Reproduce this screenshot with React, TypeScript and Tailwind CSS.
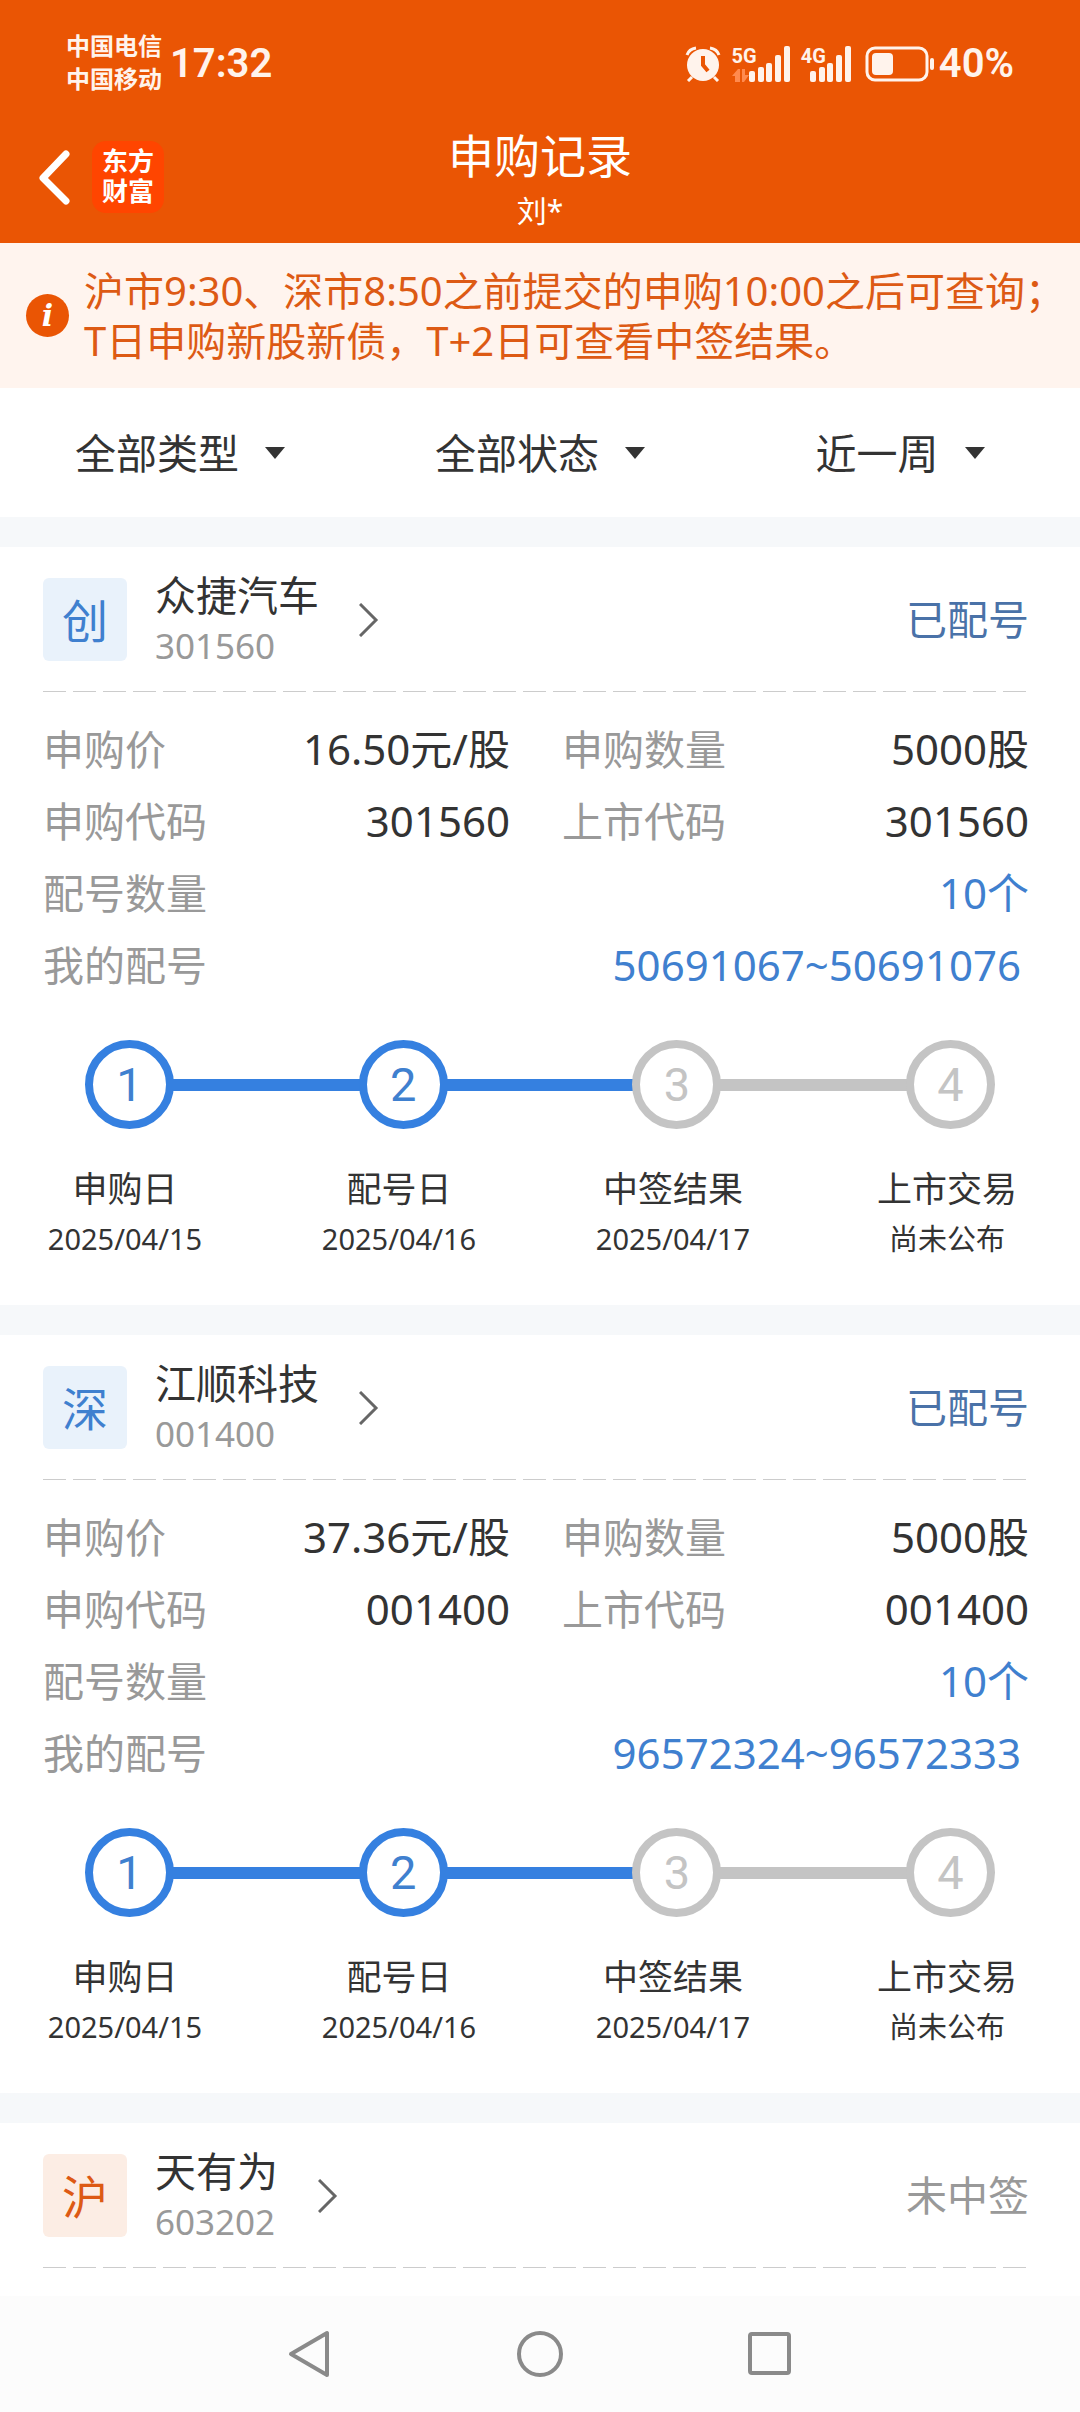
import React, { useState } from 'react';

type Step = { label: string; date: string; done: boolean };

type Subscription = {
    market: string;
    tone: 'blue' | 'orange';
    name: string;
    code: string;
    status: string;
    detail?: {
        price: string;
        amount: string;
        applyCode: string;
        listCode: string;
        allotCount: string;
        allotRange: string;
        steps: Step[];
    };
};

const STEPS: Step[] = [
    { label: '申购日', date: '2025/04/15', done: true },
    { label: '配号日', date: '2025/04/16', done: true },
    { label: '中签结果', date: '2025/04/17', done: false },
    { label: '上市交易', date: '尚未公布', done: false },
];

const RECORDS: Subscription[] = [
    {
        market: '创',
        tone: 'blue',
        name: '众捷汽车',
        code: '301560',
        status: '已配号',
        detail: {
            price: '16.50元/股',
            amount: '5000股',
            applyCode: '301560',
            listCode: '301560',
            allotCount: '10个',
            allotRange: '50691067~50691076',
            steps: STEPS,
        },
    },
    {
        market: '深',
        tone: 'blue',
        name: '江顺科技',
        code: '001400',
        status: '已配号',
        detail: {
            price: '37.36元/股',
            amount: '5000股',
            applyCode: '001400',
            listCode: '001400',
            allotCount: '10个',
            allotRange: '96572324~96572333',
            steps: STEPS,
        },
    },
    { market: '沪', tone: 'orange', name: '天有为', code: '603202', status: '未中签' },
];

const FILTERS = [
    { id: 'type', label: '类型', options: ['全部类型', '新股', '新债'] },
    { id: 'status', label: '状态', options: ['全部状态', '已配号', '已中签', '未中签'] },
    { id: 'range', label: '时间', options: ['近一周', '近一月', '近三月'] },
];

const Signal: React.FC<{ label: string; transfer?: boolean }> = ({ label, transfer }) => (
    <div className="flex items-end">
        <div className="flex h-9 flex-col justify-between">
            <span className="text-[20px] leading-5 font-bold">{label}</span>
            {transfer && (
                <svg width="17" height="13" viewBox="0 0 17 13" fill="#ff8a4e" aria-hidden="true">
                    <path d="M6 0h2v13H3V7H0zM10 0h3v6h4l-5 7h-2z" />
                </svg>
            )}
        </div>
        <svg className={transfer ? '-ml-2' : '-ml-4'} width="41" height="36" viewBox="0 0 41 36" fill="currentColor" aria-hidden="true">
            <rect x="0" y="25" width="6" height="11" rx="2" />
            <rect x="9" y="21" width="6" height="15" rx="2" />
            <rect x="17" y="17" width="6" height="19" rx="2" />
            <rect x="26" y="9" width="6" height="27" rx="2" />
            <rect x="35" y="0" width="6" height="36" rx="2" />
        </svg>
    </div>
);

const StatusBar: React.FC = () => (
    <div className="flex h-32 items-center justify-between px-[66px] font-['Roboto','Noto_Sans_CJK_SC',sans-serif] text-[#fff3ec]">
        <div className="flex items-center gap-2">
            <div className="text-[24px] leading-[33px] font-bold">
                <div>中国电信</div>
                <div>中国移动</div>
            </div>
            <span className="text-[40px] leading-[50px] font-semibold">17:32</span>
        </div>
        <div className="flex items-center gap-3.5">
            <div className="flex items-center gap-[11px]">
                <svg width="36" height="36" viewBox="0 0 36 36" aria-label="闹钟">
                    <circle cx="18" cy="19" r="16" fill="currentColor" />
                    <path d="M2 9Q4 3 11 2M34 9Q32 3 25 2M7 31l-4 4M29 31l4 4" fill="none" stroke="currentColor" strokeWidth="3" />
                    <path d="M18 10v9l5 6" fill="none" stroke="#ea5504" strokeWidth="4" />
                </svg>
                <Signal label="5G" transfer />
                <Signal label="4G" />
            </div>
            <div className="flex items-center gap-1">
                <svg width="70" height="36" viewBox="0 0 70 36" aria-label="电量">
                    <rect x="2" y="2" width="60" height="32" rx="8" fill="none" stroke="currentColor" strokeWidth="3" />
                    <rect x="7" y="7" width="21" height="22" rx="4" fill="currentColor" />
                    <rect x="65" y="12" width="4" height="12" rx="2" fill="currentColor" />
                </svg>
                <span className="text-[40px] leading-[50px] font-semibold">40%</span>
            </div>
        </div>
    </div>
);

const Header: React.FC = () => (
    <header className="bg-[#ea5504] text-white">
        <StatusBar />
        <div className="grid grid-cols-[1fr_auto_1fr] pb-[5px]">
            <div className="flex h-[98px] items-center gap-5 pl-9">
                <button type="button" aria-label="返回">
                    <svg width="36" height="56" viewBox="0 0 36 56" fill="none" stroke="currentColor" strokeWidth="7" strokeLinecap="round" strokeLinejoin="round">
                        <path d="M30 5L7 29l23 23" />
                    </svg>
                </button>
                <div className="flex size-[72px] flex-col items-center justify-center rounded-[14px] bg-[#ff4500] font-['Roboto','Noto_Sans_CJK_SC',sans-serif] text-[26px] leading-[30px] font-bold">
                    <span>东方</span>
                    <span>财富</span>
                </div>
            </div>
            <div className="text-center">
                <h1 className="text-[46px] leading-[55px]">申购记录</h1>
                <p className="text-[30px] leading-[55px]">刘*</p>
            </div>
        </div>
    </header>
);

const Notice: React.FC = () => (
    <div className="flex h-[145px] items-center gap-[15px] bg-[#fff4ee] pl-[26px] text-[#dd5a14]">
        <span className="flex size-[43px] shrink-0 items-center justify-center rounded-full bg-[#ea5504] font-['DejaVu_Serif',serif] text-[30px] leading-[43px] font-bold text-white italic">
            i
        </span>
        <p className="text-[40px] leading-[50px] whitespace-nowrap">
            沪市9:30、深市8:50之前提交的申购10:00之后可查询；
            <br />
            T日申购新股新债，T+2日可查看中签结果。
        </p>
    </div>
);

const Filters: React.FC = () => {
    const [values, setValues] = useState<Record<string, string>>({});

    return (
        <div className="grid h-[129px] grid-cols-3 bg-white">
            {FILTERS.map(filter => (
                <label key={filter.id} className="flex items-center justify-center gap-[26px]">
                    <select
                        aria-label={filter.label}
                        value={values[filter.id] ?? filter.options[0]}
                        onChange={e => setValues(prev => ({ ...prev, [filter.id]: e.target.value }))}
                        className="field-sizing-content appearance-none text-[41px] leading-[60px] text-[#333]"
                    >
                        {filter.options.map(option => (
                            <option key={option}>{option}</option>
                        ))}
                    </select>
                    <svg width="20" height="12" viewBox="0 0 20 12" fill="#333" aria-hidden="true">
                        <path d="M0 0h20L10 12z" />
                    </svg>
                </label>
            ))}
        </div>
    );
};

const Field: React.FC<{ label: string; value: string; wide?: boolean; highlight?: boolean; inset?: boolean }> = ({
    label,
    value,
    wide,
    highlight,
    inset,
}) => (
    <div className={`flex justify-between leading-[72px] ${wide ? 'col-span-2' : ''}`}>
        <dt className="text-[#999]">{label}</dt>
        <dd className={`text-[42px] ${highlight ? 'text-[#3f80cf]' : 'text-[#333]'} ${inset ? 'pr-2' : ''}`}>{value}</dd>
    </div>
);

const Progress: React.FC<{ steps: Step[] }> = ({ steps }) => (
    <div className="pt-[39px]">
        <div className="flex items-center px-[85px]">
            {steps.map((step, i) => (
                <React.Fragment key={step.label}>
                    {i > 0 && <div className={`-mx-px h-3 flex-1 ${steps[i - 1].done ? 'bg-[#3580e0]' : 'bg-[#c4c4c4]'}`} />}
                    <div
                        className={`flex size-[89px] items-center justify-center rounded-full border-8 font-['Roboto',sans-serif] text-[47px] leading-[60px] ${
                            step.done ? 'border-[#3580e0] text-[#3f80cf]' : 'border-[#c4c4c4] text-[#c4c4c4]'
                        }`}
                    >
                        {i + 1}
                    </div>
                </React.Fragment>
            ))}
        </div>
        <ol className="flex justify-between pt-[35px] pr-[45px] pb-[41px] pl-[37px] text-center text-[#333]">
            {steps.map(step => (
                <li key={step.label} className="w-44 leading-[50px]">
                    <div className="text-[35px]">{step.label}</div>
                    <div className="text-[29px]">{step.date}</div>
                </li>
            ))}
        </ol>
    </div>
);

const RecordCard: React.FC<{ record: Subscription }> = ({ record }) => {
    const { detail } = record;

    return (
        <section className="border-t-[30px] border-[#f6f8fa] bg-white text-[41px]">
            <div className="pt-[31px] pr-[51px] pl-[43px]">
                <div className="flex items-center justify-between">
                    <button type="button" className="flex items-center text-left">
                        <span
                            className={`flex h-[83px] w-[84px] items-center justify-center rounded-md text-[46px] leading-[60px] ${
                                record.tone === 'blue' ? 'bg-[#e9f2fb] text-[#3f80cf]' : 'bg-[#fcede4] text-[#dd5a14]'
                            }`}
                        >
                            {record.market}
                        </span>
                        <span className="flex h-[83px] flex-col justify-center pl-7">
                            <span className="leading-[52px] text-[#333]">{record.name}</span>
                            <span className="text-[35px] leading-[50px] text-[#999]">{record.code}</span>
                        </span>
                        <svg className="ml-10" width="20" height="34" viewBox="0 0 20 34" fill="none" stroke="#666" strokeWidth="3" aria-hidden="true">
                            <path d="M1 1l16 16L1 33" />
                        </svg>
                    </button>
                    <span className={detail ? 'text-[#4a72a8]' : 'text-[#999]'}>{record.status}</span>
                </div>
                <div className="mt-[30px] h-px bg-[repeating-linear-gradient(to_right,#ccc_0_23px,transparent_23px_30px)]" />
                {detail ? (
                    <dl className="grid grid-cols-2 gap-x-[52px] pt-[21px]">
                        <Field label="申购价" value={detail.price} />
                        <Field label="申购数量" value={detail.amount} />
                        <Field label="申购代码" value={detail.applyCode} />
                        <Field label="上市代码" value={detail.listCode} />
                        <Field label="配号数量" value={detail.allotCount} wide highlight />
                        <Field label="我的配号" value={detail.allotRange} wide highlight inset />
                    </dl>
                ) : (
                    <div className="h-7" />
                )}
            </div>
            {detail && <Progress steps={detail.steps} />}
        </section>
    );
};

const SystemNav: React.FC = () => (
    <nav className="flex h-[116px] items-center justify-center gap-[182px] bg-[#fcfcfc] text-[#8a8a8a]">
        <button type="button" aria-label="后退">
            <svg width="48" height="48" viewBox="0 0 48 48" fill="none" stroke="currentColor" strokeWidth="4" strokeLinejoin="round">
                <path d="M41 3v42L5 24z" />
            </svg>
        </button>
        <button type="button" aria-label="主页">
            <svg width="48" height="48" viewBox="0 0 48 48" fill="none" stroke="currentColor" strokeWidth="4">
                <circle cx="24" cy="24" r="21" />
            </svg>
        </button>
        <button type="button" aria-label="最近任务">
            <svg width="48" height="48" viewBox="0 0 48 48" fill="none" stroke="currentColor" strokeWidth="4">
                <rect x="4" y="4" width="39" height="39" rx="2" />
            </svg>
        </button>
    </nav>
);

const App: React.FC = () => (
    <div className="flex min-h-screen flex-col bg-white font-['Noto_Sans','Noto_Sans_CJK_SC',sans-serif]">
        <Header />
        <Notice />
        <Filters />
        <main className="flex-1">
            {RECORDS.map(record => (
                <RecordCard key={record.code} record={record} />
            ))}
        </main>
        <SystemNav />
    </div>
);

export default App;
